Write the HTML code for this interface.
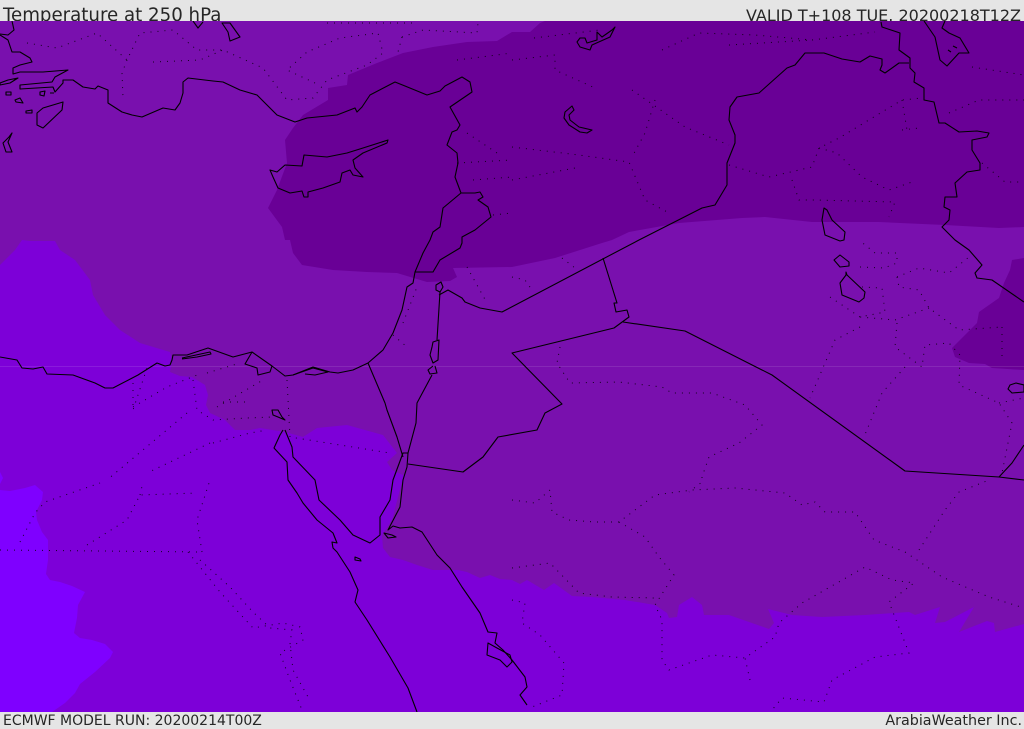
<!DOCTYPE html>
<html><head><meta charset="utf-8"><title>Temperature at 250 hPa</title>
<style>
html,body{margin:0;padding:0;width:1024px;height:729px;overflow:hidden;background:#e5e5e5}
.t{position:absolute;font-family:"DejaVu Sans","Liberation Sans",sans-serif;color:#262626;white-space:nowrap;line-height:1}
svg{position:absolute;left:0;top:0}
</style></head><body>
<div class="t" style="left:3px;top:7px;font-size:18.2px">Temperature at 250 hPa</div>
<div class="t" style="right:3px;top:8px;font-size:16px">VALID T+108 TUE. 20200218T12Z</div>
<div class="t" style="left:3px;top:714px;font-size:14px">ECMWF MODEL RUN: 20200214T00Z</div>
<div class="t" style="right:2px;top:714px;font-size:14.3px">ArabiaWeather Inc.</div>
<svg width="1024" height="729" viewBox="0 0 1024 729">
<defs><clipPath id="m"><rect x="0" y="21" width="1024" height="691"/></clipPath></defs>
<g clip-path="url(#m)">
<rect x="0" y="21" width="1024" height="691" fill="#7d00d8"/>
<path fill="#7f00ff" d="M0 490L10 491 25 488 35 485 43 492 42 500 36 512 37 520 42 532 48 540 48 560 46 574 50 580 60 582 72 586 85 592 78 605 77 618 74 633 80 638 92 640 105 644 113 652 110 658 95 672 80 684 75 693 65 703 52 712 0 712Z"/>
<path fill="#7f00ff" d="M0 472L3 478 0 484Z"/>
<path fill="#7910ae" d="M0 265L15 250 22 240 30 241 55 241 60 250 75 260 90 280 93 295 105 315 120 330 140 343 170 352 172 360 170 372 180 376 192 377 205 385 208 395 206 405 210 413 225 420 235 430 250 430 260 428 285 432 303 437 317 428 347 425 383 435 397 453 387 462 392 470 405 476 402 482 392 520 382 535 383 548 390 557 403 560 417 565 433 570 458 570 467 572 480 578 490 575 500 579 512 580 520 584 527 580 544 590 554 583 572 596 592 597 625 600 655 605 667 613 669 618 677 617 679 605 692 597 702 605 704 615 729 615 769 629 774 623 768 609 792 615 822 617 865 615 909 612 915 615 940 607 935 623 945 622 974 607 959 632 987 621 994 623 995 632 1024 624 1024 21 0 21Z"/>
<path fill="#690096" d="M545 21L540 23 530 32 512 32 497 41 467 42 433 47 403 53 377 63 348 75 347 85 328 88 328 100 303 115 293 128 285 140 287 163 277 190 268 208 282 227 285 240 290 240 293 253 302 265 333 270 367 272 397 273 427 282 450 281 457 277 453 268 512 267 555 258 602 243 612 240 629 232 679 223 742 218 765 217 812 222 879 222 945 225 999 228 1024 227 1024 21Z"/>
<path fill="#690096" d="M1012 260L1024 258 1024 370 992 368 985 364 969 363 955 357 952 348 965 335 977 323 979 312 999 298 1004 283 1010 270Z"/>
<rect x="0" y="366" width="1024" height="1" fill="#fff" opacity=".1"/>
<g fill="none" stroke="#000" stroke-width="1" stroke-dasharray="1 6" opacity=".85">
<path d="M560 347L557 363 570 383 619 382 662 387 672 393 712 393 745 405 762 425 739 443 709 457 702 477 702 482 689 492"/>
<path d="M512 500L535 503 550 490 552 512 569 520 595 522 619 522 655 495 692 490 735 488 785 493 802 505 815 502 825 512 855 512 874 540 905 552 917 560 942 577 989 597 1024 608"/>
<path d="M919 550L945 510 959 492 989 480"/>
<path d="M619 522L645 537 659 557 674 575 655 605 662 620 662 660 669 670 712 655 745 658 775 637 779 623 802 603 865 567 892 580 914 583 889 602 909 653 875 657 832 680 824 702 782 698 772 710"/>
<path d="M750 680L745 658M512 568L550 563 579 593 612 597 655 598"/>
<path d="M512 600L525 603 522 623 540 635 564 663 562 695 532 707"/>
<path d="M0 550L202 552M202 552L197 520 210 480M20 542L35 513 45 502 100 483M87 545L127 520 140 495 197 493M140 495L143 482"/>
<path d="M188 552L220 592 253 628 283 623 300 627 303 640 280 653 290 680 302 710"/>
<path d="M200 560L230 587 253 612 270 628 292 630 290 643 293 670 308 697"/>
<path d="M133 383L133 410 147 368M133 407L167 387 197 375M193 380L197 410 213 420 247 418 272 417M187 413L107 480M210 443L147 473M213 443L250 433 267 430M217 407L263 380M207 373L240 363M287 380L290 437 390 453M245 402L217 402"/>
<path d="M393 335L407 347M403 323L417 287M467 267L487 303M512 277L525 280 532 290M562 258L575 268"/>
<path d="M27 43L57 48 97 33 127 60 140 33 173 30 197 50 223 50 263 68 287 100 313 98 327 80 367 65 383 53 378 33 340 38 307 52 287 70 315 83"/>
<path d="M127 60L122 73 123 98M153 62L200 60 223 50M402 37L423 30 477 33 478 23M327 23L417 23M402 37L398 52M457 60L512 53M467 133L500 155M457 163L512 160M473 180L512 177M493 215L512 213"/>
<path d="M512 60L555 55 555 70 595 88M534 38L600 30M662 50L699 33 755 35 812 40 875 32M729 45L812 40M632 90L685 127 729 145M655 100L645 133 632 157M512 147L579 155 629 162 645 200 669 213M512 180L575 168M729 165L769 177 812 167 819 148 839 138 902 100 922 98M819 148L837 153 862 177 889 190 912 182M792 180L799 200 815 200 895 202 889 217M902 130L919 128M902 100L907 130M949 113L979 100 1024 100M972 67L1024 75M982 163L1005 182 1024 182"/>
<path d="M860 267L884 268 897 263 897 253 875 253 859 240M897 277L919 268 949 273 969 257M897 277L899 287 919 290 929 308 959 330 1002 327M929 308L895 320 860 317 885 312 882 288 862 287M860 317L830 297M860 327L835 340 822 370 810 398M897 323L895 347 922 367 925 345 949 343 960 355 959 385 999 403 1012 423 1002 473M905 367L882 393 864 437M1002 327L1002 357M999 403L1024 398"/>
</g>
<g fill="none" stroke="#000" stroke-width="1.1" stroke-linejoin="round">
<path d="M0 35L8 40 12 52 20 52 30 58 32 62 20 65 13 68 13 74 20 72 43 72 68 70 55 77 52 82 20 85 20 89 53 87 55 92 63 83 63 80 73 80 83 87 95 89 98 86 108 90 108 103 122 112 132 115 142 117 163 108 175 110 180 103 183 93 183 82 188 78 213 81 223 82 240 90 257 95 267 105 277 115 295 122 307 118 337 115 355 108 357 112 362 107 370 95 395 82 405 86 427 95 440 91 445 86 462 77 470 82 472 92 450 107 460 125 457 130 452 132 447 145 457 153 458 163 455 177 461 193 443 208 440 227 433 232 430 240 423 253 415 272 413 283 407 287 402 310 393 333 383 350 368 363 353 370 338 373 330 372 313 367 293 375 285 376 272 366 252 352 233 357 208 348 187 355 173 355 172 360 170 365 165 366 157 363 138 375 113 388 105 388 95 383 73 375 47 374 43 367 33 369 22 368 17 360 0 357"/>
<path d="M12 21L14 30 8 35 0 34M461 193H475L480 192 483 197 478 200 488 207 491 217 475 230 462 237 462 243 460 248 440 260 433 272 415 272"/>
<path d="M182 358L210 352 211 354 197 357 182 359M252 352L245 364 257 368 258 375 270 372 272 366M293 375L313 368 328 372 315 375 305 374"/>
<path d="M272 410L278 410 282 417 285 420 278 417 273 415Z"/>
<path d="M283 430L280 435 274 448 287 462 288 480 297 493 303 503 317 520 333 533 337 543 332 542 333 548 337 552 350 572 358 590 355 602 367 620 390 657 408 688 417 712"/>
<path d="M285 430L292 447 293 457 315 480 319 500 340 520 353 535 370 543 380 535 380 517 390 500 393 480 403 453 408 453 407 467 403 480 400 507 388 530 393 526 400 528 412 527 422 532 437 555 450 568 462 587 480 613 488 632 497 633 495 643 503 650 512 660 525 677 527 687 520 695 527 705"/>
<path d="M488 643L487 655 500 660 507 667 512 662 510 655 497 648ZM355 557L360 559 361 561 355 560Z"/>
<path d="M384 533L392 535 396 537 388 538Z"/>
<path d="M436 285L441 282 443 287 440 292 436 290Z"/>
<path d="M440 292L437 340M432 347L433 342 439 340 438 360 433 363 430 355ZM433 366L428 370 430 374 437 373 435 366M432 375L417 403 416 423 408 453"/>
<path d="M368 363L385 403 387 410 397 437 403 457"/>
<path d="M439 295L448 290 462 298 465 302 480 308 502 312 639 240 702 208 715 205 727 185 727 163 735 143 735 135 729 120 730 107 737 97 759 93 787 68 795 65 805 53 824 53 842 59 860 62 870 56 882 59 882 65 880 70 885 73 899 63 909 63"/>
<path d="M603 258L617 303 614 303 616 312 627 310 629 317 614 328 512 353 562 404 545 413 537 430 498 437 483 457 463 472 408 464"/>
<path d="M623 322L685 331 772 375 905 471 999 477 1024 480M999 477L1012 463 1024 445"/>
<path d="M881 22L882 27 900 33 899 50 910 58 910 68 915 73 914 82 924 88 924 100 934 102 939 123 945 123 959 132 977 131 989 133 987 137 972 140 972 150 980 163 980 170 967 172 955 183 957 197 945 197 944 207 950 210 949 220 942 227 955 240 969 250 982 265 975 273 977 278 992 280 1024 302"/>
<path d="M924 21L935 37 940 60 947 66 959 53 969 53 960 38 949 33 942 28 945 21M948 50L951 52M953 46L957 48"/>
<path d="M577 42L580 38 585 38 587 43 597 40 597 32 602 37 612 30 615 27 610 37 592 45 590 50 580 47Z"/>
<path d="M572 106L574 110 569 115 570 120 579 127 592 130 587 133 580 132 569 125 564 118 565 112Z"/>
<path d="M824 208L827 210 832 220 845 232 844 240 840 241 825 235 822 220Z"/>
<path d="M834 260L840 255 849 262 849 266 840 267Z"/>
<path d="M846 272L847 275 865 292 864 298 859 302 842 295 840 283 846 275Z"/>
<path d="M270 170L277 172 285 165 302 166 304 155 327 157 347 153 363 148 388 140 387 143 363 153 353 160 355 168 363 177 353 175 350 170 342 173 340 182 323 188 308 192 308 197 304 197 302 191 290 193 278 188 273 177Z"/>
<path d="M63 102L62 110 43 128 37 125 37 113 43 108Z"/>
<path d="M12 133L8 142 12 152 6 152 3 143 9 137Z"/>
<path d="M222 23L230 23 240 37 230 41 228 32ZM193 21L198 28 203 22"/>
<path d="M0 83L8 80 18 78 10 83 0 85ZM6 92L11 92 11 95 6 95ZM15 100L20 98 23 103 16 102ZM26 111L32 110 32 113 26 113ZM40 92L45 91 44 96 40 95ZM50 93L54 93"/>
<path d="M1010 385L1016 383 1024 385 1024 392 1012 393 1008 389Z"/>
</g>
</g>
</svg>
</body></html>
